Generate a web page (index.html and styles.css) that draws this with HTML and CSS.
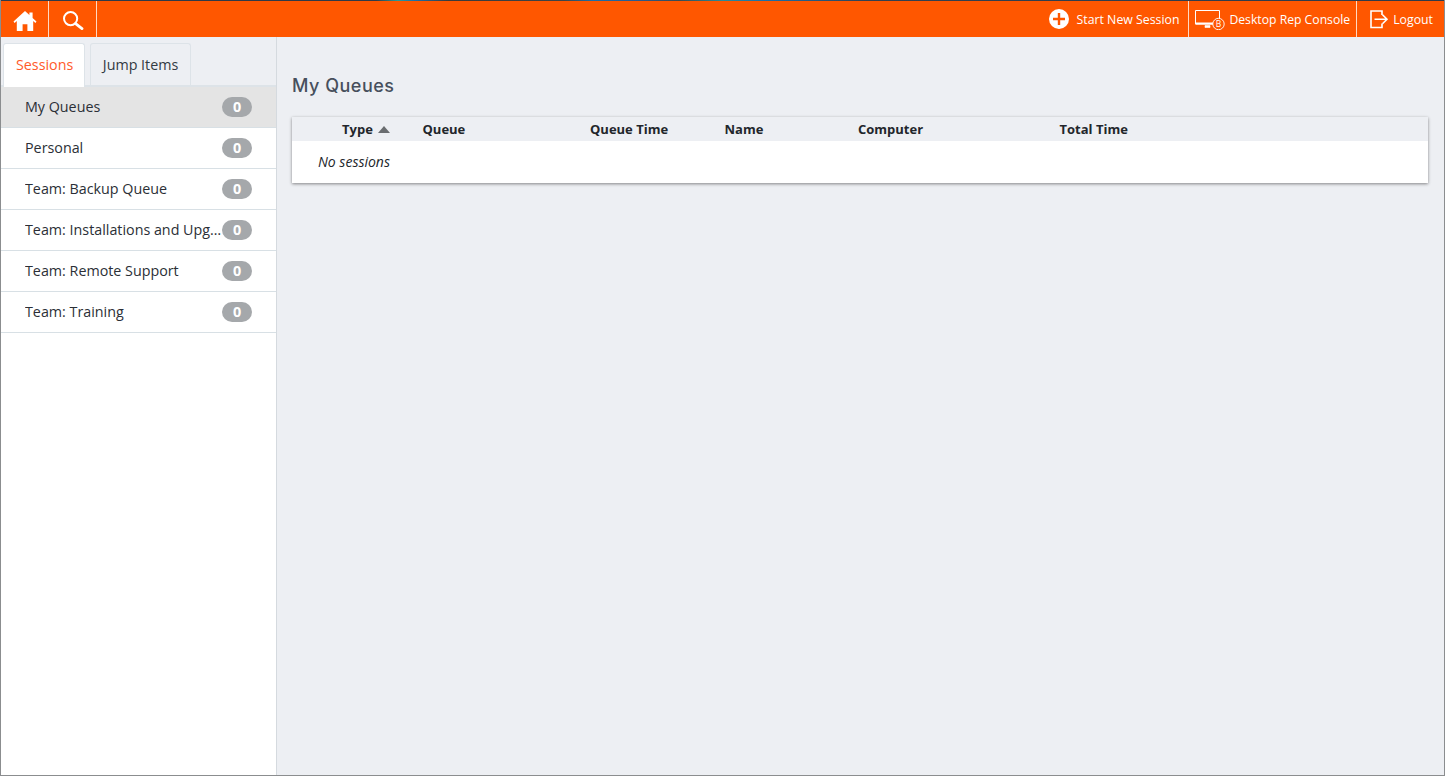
FILE: index.html
```html
<!DOCTYPE html>
<html lang="en">
<head>
<meta charset="utf-8">
<title>My Queues</title>
<link rel="stylesheet" href="styles.css">
</head>
<body>
<div class="app">
  <div class="topstrip"></div>
  <header class="topbar">
    <nav class="nav-left">
      <a class="nav-icon">
        <svg width="24" height="24" viewBox="0 -3 24 24"><path fill="#fff" d="M12 1 L0.5 11.6 L1.6 12.9 L3.8 11 V21 H9.6 V14.2 H14.4 V21 H20.2 V11 L22.4 12.9 L23.5 11.6 L19.6 8 V2.5 H16.4 V5 Z"/></svg>
      </a>
      <a class="nav-icon">
        <svg width="22" height="22" viewBox="0 0 22 22" fill="none" stroke="#fff"><circle cx="8.6" cy="10.6" r="6.6" stroke-width="2"/><path d="M13.6 15.6 L20 20.6" stroke-width="2.8" stroke-linecap="round"/></svg>
      </a>
    </nav>
    <nav class="nav-right">
      <a class="nav-item nav-start">
        <svg width="20" height="20" viewBox="0 0 20 20"><circle cx="10" cy="10" r="10" fill="#fff"/><path d="M10 4 V16 M4 10 H16" stroke="#ff5700" stroke-width="2.4"/></svg>
        <span>Start New Session</span>
      </a>
      <a class="nav-item nav-desktop">
        <svg width="30" height="22" viewBox="0 0 30 22" fill="none" stroke="#fff"><path d="M0.5 2.5 H24.5 V16 H0.5 Z" stroke-width="1"/><path d="M0.5 15.5 H18" stroke-width="2"/><path d="M10 17.5 H15 V19.5 H10 Z" fill="#fff" stroke-width="0.6"/><circle cx="23.5" cy="16" r="5.7" fill="#ff5700" stroke-width="0.9"/><text x="23.5" y="19.1" class="rep-b">B</text></svg>
        <span>Desktop Rep Console</span>
      </a>
      <a class="nav-item nav-logout">
        <svg width="20" height="20" viewBox="0 0 20 20" fill="none" stroke="#fff" stroke-width="1.6"><path d="M13 6 V2 H2 V18.5 H13 V14.5"/><path d="M5.5 10.2 H18 M13.5 5.7 L18 10.2 L13.5 14.7"/></svg>
        <span>Logout</span>
      </a>
    </nav>
  </header>
  <div class="body">
    <aside class="sidebar">
      <div class="tabs">
        <a class="tab tab-active">Sessions</a>
        <a class="tab tab-idle">Jump Items</a>
      </div>
      <ul class="queues">
        <li class="queue queue-active"><span class="queue-name">My Queues</span><span class="badge">0</span></li>
        <li class="queue"><span class="queue-name">Personal</span><span class="badge">0</span></li>
        <li class="queue"><span class="queue-name">Team: Backup Queue</span><span class="badge">0</span></li>
        <li class="queue"><span class="queue-name">Team: Installations and Upgrades</span><span class="badge">0</span></li>
        <li class="queue"><span class="queue-name">Team: Remote Support</span><span class="badge">0</span></li>
        <li class="queue"><span class="queue-name">Team: Training</span><span class="badge">0</span></li>
      </ul>
    </aside>
    <main class="content">
      <h1 class="title">My Queues</h1>
      <section class="card">
        <div class="thead">
          <div class="th th-type">Type <span class="sort"></span></div>
          <div class="th">Queue</div>
          <div class="th">Queue Time</div>
          <div class="th">Name</div>
          <div class="th">Computer</div>
          <div class="th">Total Time</div>
        </div>
        <div class="empty">No sessions</div>
      </section>
    </main>
  </div>
</div>
</body>
</html>
```
FILE: styles.css
```css
* { box-sizing: border-box; }
html, body { margin: 0; height: 100%; overflow: hidden; }
body { font-family: "Open Sans", "Liberation Sans", sans-serif; color: #2b2f36; background: #edeff3; }
.app { height: 776px; display: flex; flex-direction: column; border: 1px solid #8b8d8f; border-top: 0; }
.topstrip { height: 1px; flex: none; background: linear-gradient(90deg, #2f3a48 0, #2f3a48 26%, #2a9a98 27.5%, #1c6ea8 28.7%, #3a3a3a 31%, #3c4448 39%, #1c6ea8 41%, #2a5a90 44%, #3a4a50 47%, #2a8a98 50%, #1c6ea8 53%, #334050 60%, #2f3a48 100%); }
.topbar { height: 36px; flex: none; background: #ff5700; display: flex; justify-content: space-between; color: #fff; }
.nav-left, .nav-right { display: flex; }
.nav-icon { width: 48px; display: flex; align-items: center; justify-content: center; border-right: 1px solid #ffd9c2; }
.nav-item { display: flex; align-items: center; font-size: 12.3px; }
.nav-start { gap: 8px; padding-right: 9px; border-right: 1px solid #ffd9c2; }
.nav-desktop { gap: 4px; padding: 0 6px; font-size: 12.2px; border-right: 1px solid #ffd9c2; }
.nav-logout { gap: 4px; padding: 0 11px 0 12px; }
.rep-b { font-family: "Open Sans", sans-serif; font-size: 8.5px; fill: #fff; stroke: none; text-anchor: middle; }
.body { flex: 1; display: flex; min-height: 0; }
.sidebar { width: 276px; flex: none; background: #fff; border-right: 1px solid #d5dadf; }
.tabs { height: 50px; background: #edeff3; display: flex; align-items: flex-start; gap: 4.5px; padding: 6px 0 0 2px; border-bottom: 2px solid #dde3e8; }
.tab { display: flex; align-items: center; font-size: 14.3px; color: #333a42; border: 1px solid #dde3e8; border-bottom: 0; border-radius: 3px 3px 0 0; }
.tab-active { background: #fff; color: #ff5a2a; height: 44px; padding: 0 11px 2px 12px; position: relative; }
.tab-idle { height: 42px; padding: 0 12px; }
.queues { margin: 0; padding: 0; list-style: none; }
.queue { height: 41px; display: flex; align-items: center; padding: 0 24px; font-size: 14.3px; color: #2b2f36; border-bottom: 1px solid #d8e0e5; }
.queue-active { background: #e4e4e4; }
.queue-name { flex: 1; min-width: 0; margin-bottom: 2px; overflow: hidden; white-space: nowrap; text-overflow: ellipsis; }
.badge { flex: none; width: 30px; height: 20px; padding-bottom: 1px; border-radius: 10px; background: #a5a8ab; color: #fff; font-size: 14.4px; font-weight: 700; display: flex; align-items: center; justify-content: center; }
.content { flex: 1; min-width: 0; padding: 38px 16px 0 15px; }
.title { margin: 0; height: 22px; line-height: 22px; font-family: Inter, "Open Sans", sans-serif; font-size: 18px; font-weight: 500; color: #474f5c; letter-spacing: 0.5px; }
.card { margin-top: 20px; background: #fff; box-shadow: 0 1px 3px rgba(0,0,0,.45); }
.thead { height: 24px; background: #edeff3; display: grid; grid-template-columns: 130.5px 167.5px 134.5px 133.5px 201.5px 1fr; align-items: center; }
.th { font-size: 13px; font-weight: 700; color: #22262b; white-space: nowrap; }
.th-type { padding-left: 50px; display: flex; align-items: center; gap: 5px; }
.sort { width: 0; height: 0; border-left: 6px solid transparent; border-right: 6px solid transparent; border-bottom: 7px solid #6a6d70; }
.empty { height: 42px; padding: 0 0 2px 26px; display: flex; align-items: center; font-size: 14px; font-style: italic; color: #22262b; }
```
